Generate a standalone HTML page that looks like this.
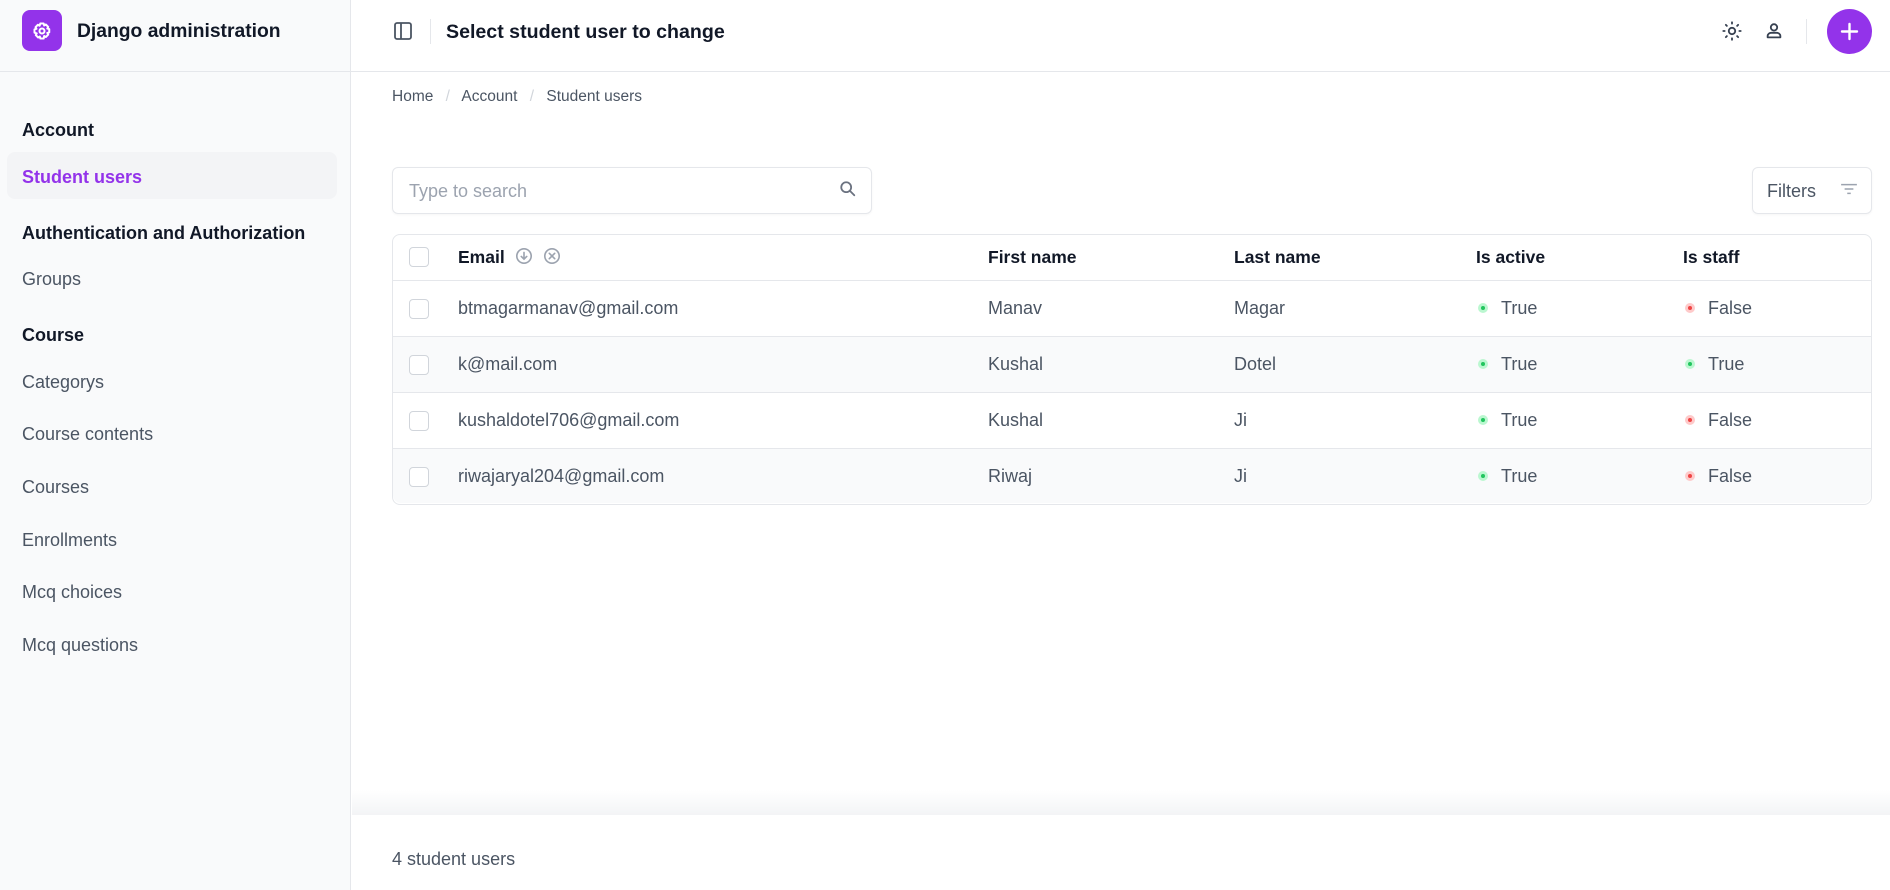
<!DOCTYPE html>
<html><head><meta charset="utf-8"><style>
*{box-sizing:border-box;margin:0;padding:0}
body{width:1890px;height:890px;overflow:hidden;background:#fff;font-family:"Liberation Sans",sans-serif;color:#111827;position:relative}
.a{position:absolute;white-space:nowrap}
.side{position:absolute;left:0;top:0;width:351px;height:890px;background:#f9fafb;border-right:1px solid #e5e7eb}
.hl{position:absolute;left:0;top:71px;width:1890px;height:1px;background:#e5e7eb}
.sh{font-weight:bold;font-size:18px;color:#111827;line-height:22px}
.si{font-size:18px;color:#4b5563;line-height:22px}
.bc{font-size:15.5px;color:#4b5563;line-height:20px}
.th{font-weight:bold;font-size:18px;color:#111827;line-height:22px}
.td{font-size:18px;color:#4b5563;line-height:22px}
.cb{position:absolute;width:20px;height:20px;border:1px solid #d1d5db;border-radius:4px;background:#fff;left:409px}
.row{position:absolute;left:393px;width:1478px;height:56px;border-top:1px solid #e5e7eb}
.dot{position:absolute;width:10px;height:10px;border-radius:50%}
.g{background:#bbf7d0}.g::after{content:"";position:absolute;left:3px;top:3px;width:4px;height:4px;border-radius:50%;background:#22c55e}
.r{background:#fecaca}.r::after{content:"";position:absolute;left:3px;top:3px;width:4px;height:4px;border-radius:50%;background:#ef4444}
</style></head><body>
<div class="side"></div>
<div class="hl"></div>

<!-- logo -->
<div class="a" style="left:22px;top:10px;width:40px;height:41px;border-radius:8px;background:#9333ea"></div>
<svg class="a" style="left:32px;top:21px" width="20" height="20" viewBox="0 0 24 24" fill="none" stroke="#fff" stroke-width="2.4" stroke-linejoin="round"><path d="M10 3h4l.6 2.4 2-1.2 2.9 2.9-1.2 2 2.4.6v4l-2.4.6 1.2 2-2.9 2.9-2-1.2L14 21h-4l-.6-2.4-2 1.2-2.9-2.9 1.2-2L3 14v-4l2.4-.6-1.2-2 2.9-2.9 2 1.2z"/><circle cx="12" cy="12" r="3"/></svg>
<div class="a" style="left:77px;top:20px;font-size:19.3px;font-weight:bold;line-height:24px;color:#111827">Django administration</div>

<!-- header -->
<svg class="a" style="left:393px;top:21px" width="20" height="20" viewBox="0 0 20 20" fill="none" stroke="#4b5563" stroke-width="1.8"><rect x="2" y="2" width="16" height="16" rx="2"/><path d="M8 2v16"/></svg>
<div class="a" style="left:430px;top:19px;width:1px;height:25px;background:#e5e7eb"></div>
<div class="a" style="left:446px;top:20px;font-size:19.6px;font-weight:bold;line-height:24px">Select student user to change</div>

<svg class="a" style="left:1721px;top:20px" width="22" height="22" viewBox="0 0 24 24" fill="none" stroke="#374151" stroke-width="2" stroke-linecap="round"><circle cx="12" cy="12" r="3.5"/><path d="M12 2.5v1.5M12 20v1.5M2.5 12h1.5M20 12h1.5M5.3 5.3l1.1 1.1M17.6 17.6l1.1 1.1M5.3 18.7l1.1-1.1M17.6 6.4l1.1-1.1"/></svg>
<svg class="a" style="left:1764px;top:21px" width="20" height="20" viewBox="0 0 22 22" fill="none" stroke="#374151" stroke-width="2"><circle cx="11" cy="7" r="3.5"/><path d="M4 18v-1.5c0-2 2-3.5 4-3.5h6c2 0 4 1.5 4 3.5V18z" stroke-linejoin="round"/></svg>
<div class="a" style="left:1806px;top:19px;width:1px;height:25px;background:#e5e7eb"></div>
<div class="a" style="left:1827px;top:9px;width:45px;height:45px;border-radius:50%;background:#9333ea"></div>
<svg class="a" style="left:1839px;top:21px" width="21" height="21" viewBox="0 0 21 21" stroke="#fff" stroke-width="2.4" stroke-linecap="round"><path d="M10.5 3v15M3 10.5h15"/></svg>

<!-- sidebar -->
<div class="a sh" style="left:22px;top:119px">Account</div>
<div class="a" style="left:7px;top:152px;width:330px;height:47px;border-radius:8px;background:#f3f4f6"></div>
<div class="a sh" style="left:22px;top:166px;color:#9333ea;font-weight:bold">Student users</div>
<div class="a sh" style="left:22px;top:222px">Authentication and Authorization</div>
<div class="a si" style="left:22px;top:268px">Groups</div>
<div class="a sh" style="left:22px;top:324px">Course</div>
<div class="a si" style="left:22px;top:371px">Categorys</div>
<div class="a si" style="left:22px;top:423px">Course contents</div>
<div class="a si" style="left:22px;top:476px">Courses</div>
<div class="a si" style="left:22px;top:529px">Enrollments</div>
<div class="a si" style="left:22px;top:581px">Mcq choices</div>
<div class="a si" style="left:22px;top:634px">Mcq questions</div>

<!-- breadcrumbs -->
<div class="a bc" style="left:392px;top:87px">Home <span style="color:#d1d5db;margin:0 8px">/</span> Account <span style="color:#d1d5db;margin:0 8px">/</span> Student users</div>

<!-- search -->
<div class="a" style="left:392px;top:167px;width:480px;height:47px;border:1px solid #e5e7eb;border-radius:6px;box-shadow:0 1px 2px rgba(0,0,0,.04)"></div>
<div class="a" style="left:409px;top:180px;font-size:18px;color:#9ca3af;line-height:22px">Type to search</div>
<svg class="a" style="left:839px;top:180px" width="18" height="18" viewBox="0 0 20 20" fill="none" stroke="#6b7280" stroke-width="2" stroke-linecap="round"><circle cx="8" cy="8" r="5.5"/><path d="M12 12l5 5"/></svg>
<div class="a" style="left:1752px;top:167px;width:120px;height:47px;border:1px solid #e5e7eb;border-radius:6px;box-shadow:0 1px 2px rgba(0,0,0,.04)"></div>
<div class="a" style="left:1767px;top:180px;font-size:18px;color:#4b5563;line-height:22px">Filters</div>
<svg class="a" style="left:1840px;top:182px" width="18" height="14" viewBox="0 0 20 16" stroke="#9ca3af" stroke-width="1.8"><path d="M1 3h18M5 8h10M8 13h4"/></svg>

<!-- table -->
<div class="a" style="left:392px;top:234px;width:1480px;height:271px;border:1px solid #e5e7eb;border-radius:8px;overflow:hidden"></div>
<div class="row" style="top:280px;background:#fff"></div>
<div class="row" style="top:336px;background:#f9fafb"></div>
<div class="row" style="top:392px;background:#fff"></div>
<div class="row" style="top:448px;background:#f9fafb;height:55px;border-radius:0 0 8px 8px"></div>

<div class="cb" style="top:247px"></div>
<div class="a th" style="left:458px;top:246px;font-size:17.5px">Email</div>
<svg class="a" style="left:515px;top:247px" width="18" height="18" viewBox="0 0 20 20" fill="none" stroke="#9ca3af" stroke-width="1.8" stroke-linecap="round"><circle cx="10" cy="10" r="8"/><path d="M10 6v7M7 10.5l3 3 3-3"/></svg>
<svg class="a" style="left:543px;top:247px" width="18" height="18" viewBox="0 0 20 20" fill="none" stroke="#9ca3af" stroke-width="1.8" stroke-linecap="round"><circle cx="10" cy="10" r="8"/><path d="M7 7l6 6M13 7l-6 6"/></svg>
<div class="a th" style="left:988px;top:246px;font-size:17.5px">First name</div>
<div class="a th" style="left:1234px;top:246px;font-size:17.5px">Last name</div>
<div class="a th" style="left:1476px;top:246px;font-size:17.5px">Is active</div>
<div class="a th" style="left:1683px;top:246px;font-size:17.5px">Is staff</div>

<div class="cb" style="top:299px"></div>
<div class="a td" style="left:458px;top:297px">btmagarmanav@gmail.com</div>
<div class="a td" style="left:988px;top:297px">Manav</div>
<div class="a td" style="left:1234px;top:297px">Magar</div>
<div class="dot g" style="left:1478px;top:303px"></div><div class="a td" style="left:1501px;top:297px">True</div>
<div class="dot r" style="left:1685px;top:303px"></div><div class="a td" style="left:1708px;top:297px">False</div>

<div class="cb" style="top:355px"></div>
<div class="a td" style="left:458px;top:353px">k@mail.com</div>
<div class="a td" style="left:988px;top:353px">Kushal</div>
<div class="a td" style="left:1234px;top:353px">Dotel</div>
<div class="dot g" style="left:1478px;top:359px"></div><div class="a td" style="left:1501px;top:353px">True</div>
<div class="dot g" style="left:1685px;top:359px"></div><div class="a td" style="left:1708px;top:353px">True</div>

<div class="cb" style="top:411px"></div>
<div class="a td" style="left:458px;top:409px">kushaldotel706@gmail.com</div>
<div class="a td" style="left:988px;top:409px">Kushal</div>
<div class="a td" style="left:1234px;top:409px">Ji</div>
<div class="dot g" style="left:1478px;top:415px"></div><div class="a td" style="left:1501px;top:409px">True</div>
<div class="dot r" style="left:1685px;top:415px"></div><div class="a td" style="left:1708px;top:409px">False</div>

<div class="cb" style="top:467px"></div>
<div class="a td" style="left:458px;top:465px">riwajaryal204@gmail.com</div>
<div class="a td" style="left:988px;top:465px">Riwaj</div>
<div class="a td" style="left:1234px;top:465px">Ji</div>
<div class="dot g" style="left:1478px;top:471px"></div><div class="a td" style="left:1501px;top:465px">True</div>
<div class="dot r" style="left:1685px;top:471px"></div><div class="a td" style="left:1708px;top:465px">False</div>

<!-- footer -->
<div class="a" style="left:352px;top:790px;width:1538px;height:25px;background:linear-gradient(#fff,#f3f4f6)"></div>
<div class="a" style="left:352px;top:815px;width:1538px;height:75px;background:#fff"></div>
<div class="a" style="left:392px;top:848px;font-size:18px;color:#4b5563;line-height:22px">4 student users</div>
</body></html>
